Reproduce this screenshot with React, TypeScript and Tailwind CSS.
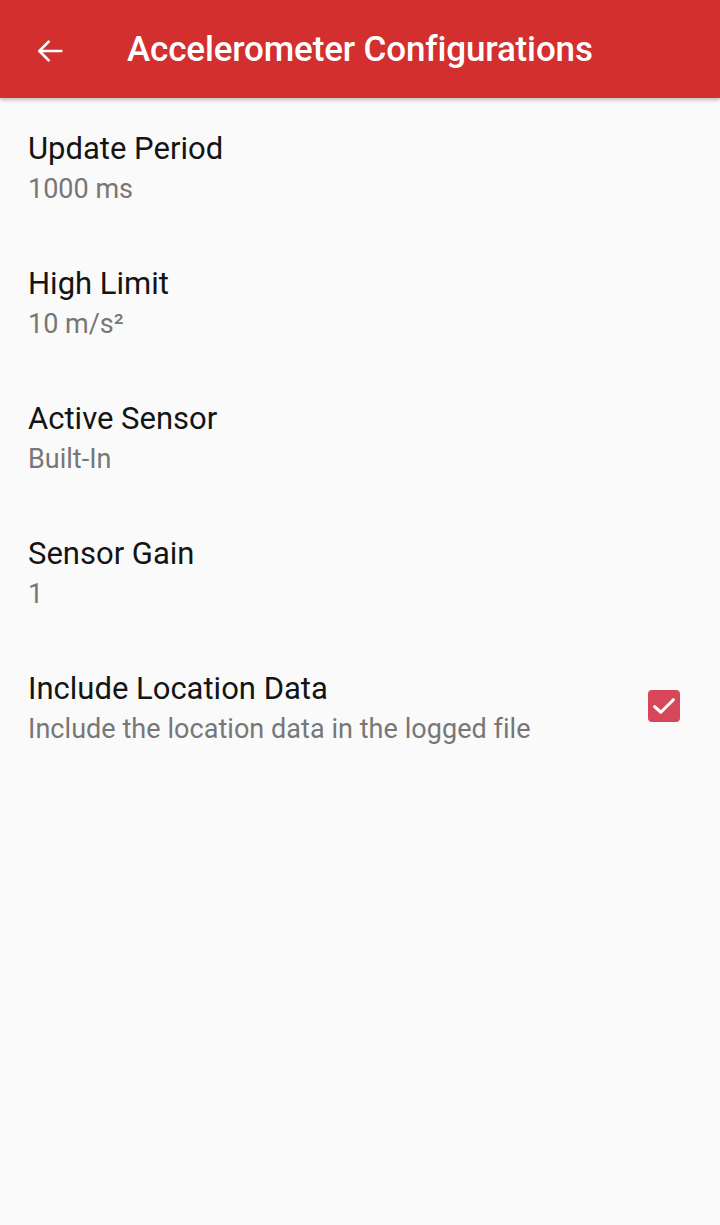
import React from "react";

const items = [
  { title: "Update Period", sub: "1000 ms" },
  { title: "High Limit", sub: "10 m/s²" },
  { title: "Active Sensor", sub: "Built-In" },
  { title: "Sensor Gain", sub: "1" },
];

export default function App() {
  return (
    <div className="w-[720px] h-[1225px] bg-[#fafafa] overflow-hidden" style={{ fontFamily: "Roboto, 'Noto Sans', sans-serif" }}>
      <div className="h-[98px] bg-[#d32f2f] flex items-center pt-[3px] shadow-[0_2px_4px_rgba(0,0,0,0.25)] relative z-10">
        <div className="w-[127px] pl-[34px] flex items-center">
          <svg width="32" height="32" viewBox="0 0 24 24" fill="none" stroke="white" strokeWidth="2" strokeLinecap="round" strokeLinejoin="round">
            <path d="M20.5 12H4M11 5l-7 7 7 7" />
          </svg>
        </div>
        <div className="text-white text-[35px] font-medium tracking-[-0.15px] whitespace-nowrap">Accelerometer Configurations</div>
      </div>
      <div className="flex flex-col pt-[14px]">
        {items.map((it) => (
          <div key={it.title} className="h-[135px] px-[28px] flex flex-col justify-start pt-[19px]">
            <div className="text-[31px] leading-[36px] text-[#141414]">{it.title}</div>
            <div className="text-[27px] leading-[32px] text-[#777777] mt-[6px]">{it.sub}</div>
          </div>
        ))}
        <div className="h-[135px] px-[28px] pt-[19px] flex items-start">
          <div className="flex-1">
            <div className="text-[31px] leading-[36px] text-[#141414]">Include Location Data</div>
            <div className="text-[27px] leading-[32px] text-[#777777] mt-[6px] tracking-[0.05px]">Include the location data in the logged file</div>
          </div>
          <div className="w-[32px] h-[32px] rounded-[4px] bg-[#d6475a] flex items-center justify-center mt-[19px] mr-[12px]">
            <svg width="30" height="30" viewBox="0 0 24 24" fill="none" stroke="white" strokeWidth="2.5" strokeLinecap="round" strokeLinejoin="round">
              <path d="M4.5 12.5l5 4.5 10-10" />
            </svg>
          </div>
        </div>
      </div>
    </div>
  );
}
